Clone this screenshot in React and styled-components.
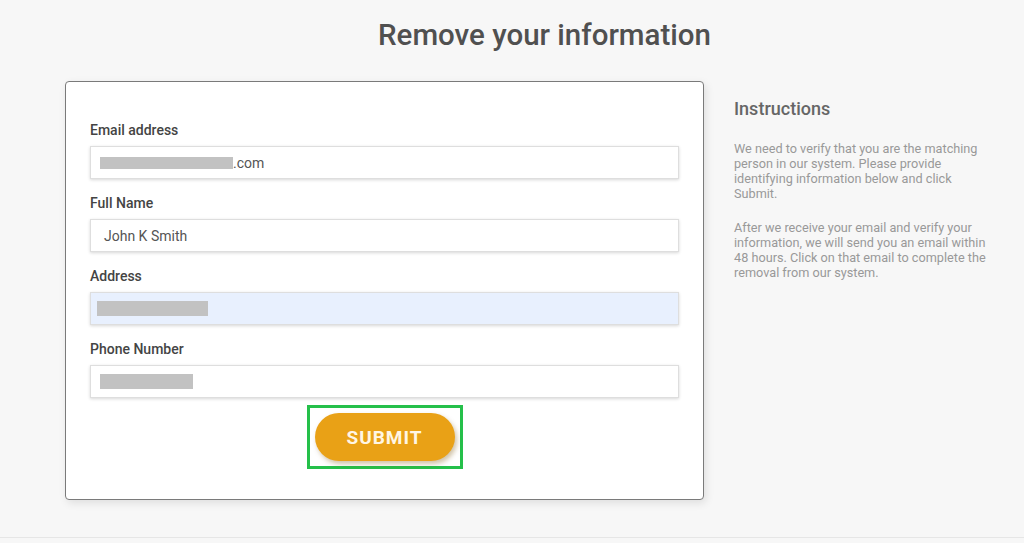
import React from "react";
import styled, { createGlobalStyle } from "styled-components";

const Global = createGlobalStyle`
  html, body { margin: 0; padding: 0; background: #f7f7f7; }
  body { font-family: Roboto, "Liberation Sans", Arial, sans-serif; }
  * { box-sizing: border-box; }
`;

const Page = styled.div`
  height: 538px;
  border-bottom: 1px solid #e6e6e6;
  padding: 17px 0 0 65px;
  background: #f7f7f7;
`;

const Title = styled.h1`
  margin: 0;
  font-size: 29.5px;
  line-height: 37px;
  font-weight: 500;
  color: #505050;
  text-align: center;
`;

const Row = styled.div`
  display: flex;
  align-items: flex-start;
  gap: 30px;
  margin-top: 27px;
`;

const Card = styled.form`
  width: 639px;
  height: 419px;
  background: #fff;
  border: 1px solid #7a7a7a;
  border-radius: 4px;
  box-shadow: 2px 3px 8px rgba(0, 0, 0, 0.1);
  padding: 38px 24px 0;
  display: flex;
  flex-direction: column;
`;

const Group = styled.div`
  display: flex;
  flex-direction: column;
  gap: 6px;
  margin-bottom: 14px;
`;

const Label = styled.label`
  font-size: 14px;
  line-height: 20px;
  font-weight: 500;
  color: #444;
`;

const Field = styled.div`
  height: 33px;
  display: flex;
  align-items: center;
  padding-left: ${(p) => p.$pad}px;
  background: ${(p) => (p.$autofill ? "#e8f0fe" : "#fff")};
  border: 1px solid #dedede;
  box-shadow: 0 1px 3px rgba(0, 0, 0, 0.16);
  font-size: 14px;
  color: #555;
`;

const Redacted = styled.span`
  display: inline-block;
  width: ${(p) => p.$w}px;
  height: ${(p) => p.$h}px;
  background: #c2c2c2;
`;

const SubmitWrap = styled.div`
  align-self: center;
  margin-top: -7px;
  border: 3px solid #25c04a;
  padding: 5px;
`;

const Submit = styled.button`
  width: 140px;
  height: 48px;
  border: none;
  border-radius: 24px;
  background: #e9a116;
  color: #fff6e4;
  font-family: Roboto, "Liberation Sans", Arial, sans-serif;
  font-size: 19px;
  font-weight: 700;
  letter-spacing: 1px;
  box-shadow: 2px 3px 5px rgba(120, 80, 0, 0.35);
  display: block;
`;

const Side = styled.aside`
  width: 262px;
  padding-top: 16px;
`;

const SideTitle = styled.h2`
  margin: 0 0 20px;
  font-size: 18px;
  line-height: 24px;
  font-weight: 500;
  color: #666;
`;

const Para = styled.p`
  margin: 0 0 19px;
  font-size: 12.7px;
  line-height: 15px;
  color: #999;
`;

export default function App() {
  return (
    <>
      <Global />
      <Page>
        <Title>Remove your information</Title>
        <Row>
          <Card onSubmit={(e) => e.preventDefault()}>
            <Group>
              <Label>Email address</Label>
              <Field $pad={9}>
                <Redacted $w={133} $h={12} />
                <span>.com</span>
              </Field>
            </Group>
            <Group>
              <Label>Full Name</Label>
              <Field $pad={13}>John K Smith</Field>
            </Group>
            <Group>
              <Label>Address</Label>
              <Field $pad={6} $autofill>
                <Redacted $w={111} $h={15} />
              </Field>
            </Group>
            <Group>
              <Label>Phone Number</Label>
              <Field $pad={9}>
                <Redacted $w={93} $h={15} />
              </Field>
            </Group>
            <SubmitWrap>
              <Submit type="submit">SUBMIT</Submit>
            </SubmitWrap>
          </Card>
          <Side>
            <SideTitle>Instructions</SideTitle>
            <Para>
              We need to verify that you are the matching person in our system.
              Please provide identifying information below and click Submit.
            </Para>
            <Para>
              After we receive your email and verify your information, we will
              send you an email within 48 hours. Click on that email to complete
              the removal from our system.
            </Para>
          </Side>
        </Row>
      </Page>
    </>
  );
}
